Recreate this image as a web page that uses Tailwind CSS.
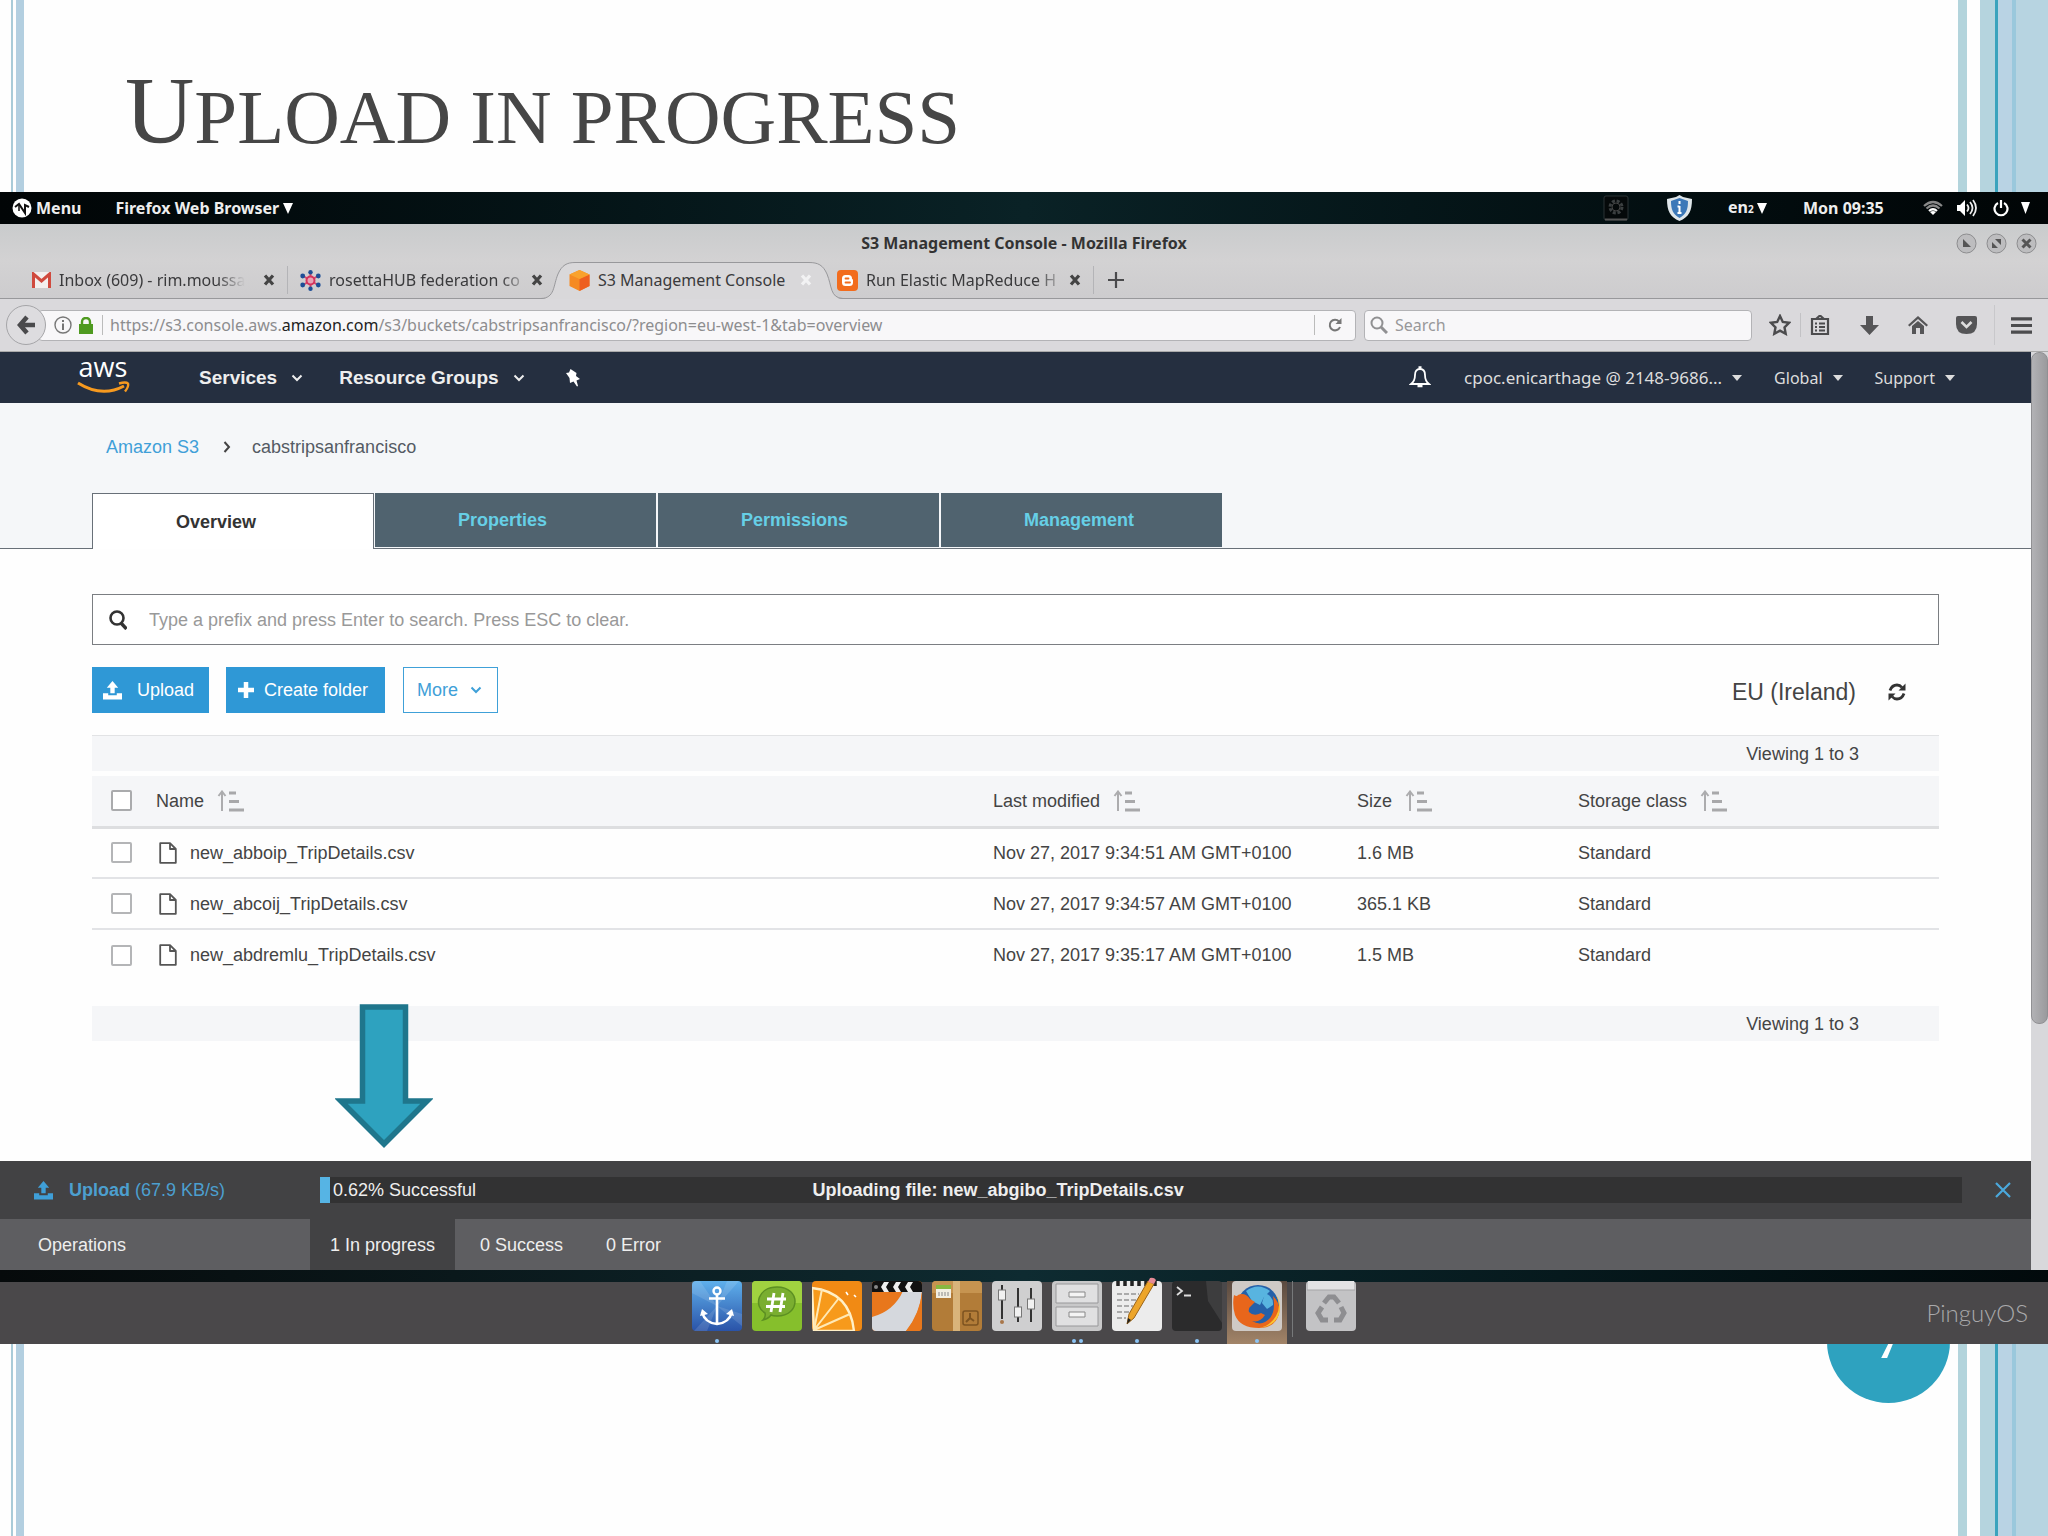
<!DOCTYPE html>
<html lang="en">
<head>
<meta charset="utf-8">
<meta name="viewport" content="width=device-width, initial-scale=1">
<title>Upload in progress</title>
<script src="https://cdn.jsdelivr.net/npm/@tailwindcss/browser@4"></script>
</head>
<body class="bg-[#fefefe]">
<svg class="hidden" aria-hidden="true">
  <symbol id="sort" viewBox="0 0 28 22"><path d="M5 21V2M1.500 6 5 1.500 8.500 6" fill="none" stroke="#acacae" stroke-width="2"/><path d="M12 3h7M12 11.500h10M12 20h15" stroke="#a8a8aa" stroke-width="3"/></symbol>
  <symbol id="file" viewBox="0 0 18 22"><path d="M1.200 1.200H11L16.800 7v13.800H1.200zM11 1.200V7h5.800" fill="#fff" stroke="#555" stroke-width="1.800" stroke-linejoin="round"/></symbol>
  <symbol id="upload" viewBox="0 0 20 20"><path d="M10 0 16 7H12.300V13H7.700V7H4z"/><path d="M0 13h5.500v2h9v-2H20v6.500H0z"/></symbol>
  <symbol id="chev" viewBox="0 0 12 8"><path d="M1.500 1.500 6 6l4.500-4.500" fill="none" stroke="currentColor" stroke-width="2"/></symbol>
  <symbol id="caret" viewBox="0 0 10 6"><path d="M0 0h10L5 6z" fill="currentColor"/></symbol>
  <symbol id="x" viewBox="0 0 12 12"><path d="M2 1.500 10 10.500M10 1.500 2 10.500" stroke="currentColor" stroke-width="3.200"/></symbol>
</svg>

<div class="grid min-h-screen overflow-hidden">
  <!-- Slide side stripes -->
  <div class="col-start-1 row-start-1 flex" aria-hidden="true">
    <div class="ml-[11px] w-[2px] bg-[#a9cbd8]"></div>
    <div class="ml-[3px] w-2 bg-[#b3cfe0]"></div>
    <div class="ml-auto w-[9px] bg-[#b3d4dc]"></div>
    <div class="ml-[13px] w-[15px] bg-[#b5d4de]"></div>
    <div class="w-[3px] bg-[#3ba3bd]"></div>
    <div class="w-[14px] bg-[#b9d3e4]"></div>
    <div class="w-1 bg-[#9ac8dc]"></div>
    <div class="w-8 bg-[#b7d4e1]"></div>
  </div>

  <div class="col-start-1 row-start-1 flex flex-col">
    <h1 class="flex h-48 items-center px-[125px] font-['Liberation_Serif',serif] text-[#464646]"><span class="block w-full pt-9 text-[77px] leading-[96px] uppercase first-letter:text-[96px]">Upload in progress</span></h1>

    <section class="relative z-10 bg-white font-['Liberation_Sans',sans-serif] text-[18px] leading-6 text-[#444]">
      <!-- Desktop panel -->
      <header class="flex h-8 items-center bg-linear-to-r from-[#010506] via-[#0a2226] to-[#010506] pr-[18px] pl-3 font-['Noto_Sans',sans-serif] text-[16px] font-bold text-[#eee]">
        <button class="flex items-center gap-1">
          <svg class="size-5" viewBox="0 0 20 20"><circle cx="10" cy="10" r="9.500" fill="#fff"/><path d="m3 9 4-3 6 9V7l4 2" fill="none" stroke="#111" stroke-width="2"/><path d="M7 6v7" stroke="#111" stroke-width="1.500"/></svg>Menu</button>
        <button class="ml-[34px] flex items-center gap-1">Firefox Web Browser <svg class="h-[11px] w-[10px]" viewBox="0 0 10 11"><path d="M0 0h10L5 11z" fill="#fff"/></svg></button>
        <div class="ml-auto flex items-center">
          <svg class="size-[26px]" viewBox="0 0 26 26"><rect x="1" y="1" width="24" height="24" rx="2" fill="#05090a" stroke="#2b3335"/><path d="M2 24.500h22" stroke="#555" stroke-width="2"/><circle cx="13" cy="12" r="6" fill="none" stroke="#3b3f40" stroke-width="3" stroke-dasharray="3 1.700"/><circle cx="13" cy="12" r="4" fill="none" stroke="#444"/></svg>
          <svg class="ml-[37px] h-7 w-[27px]" viewBox="0 0 27 28"><path d="M13.500 1 17 3l9 2c0 12-3 18-12.500 22C4 23 1 17 1 5l9-2z" fill="#dfe6ea"/><path d="M13.500 4 22 7c0 9-2 13-8.500 17C7 20 5 16 5 7z" fill="#3c78b8"/><path d="M13.500 7v3M13.500 12v7M11.500 12.500h2M11.500 19h4" stroke="#fff" stroke-width="2"/></svg>
          <button class="ml-[35px] flex w-11 items-center gap-[3px]"><span>en<span class="text-[10px]">2</span></span><svg class="h-[11px] w-[10px]" viewBox="0 0 10 11"><path d="M0 0h10L5 11z" fill="#fff"/></svg></button>
          <time class="ml-[31px] w-[82px] whitespace-nowrap">Mon 09:35</time>
          <svg class="ml-[38px] h-4 w-5" viewBox="0 0 20 16" fill="none" stroke-width="2.200"><path d="M1 6Q10-2 19 6M3.500 8.500Q10 2.500 16.500 8.500" stroke="#888"/><path d="M6 11q4-3.500 8 0" stroke="#fff"/><path d="m10 15-3-3q3-2 6 0z" fill="#fff"/></svg>
          <svg class="ml-[14px] h-[18px] w-5" viewBox="0 0 20 18"><path d="M0 6h3l5-5v16l-5-5H0z" fill="#fff"/><path d="M10 5.500q3 3.500 0 7M13 3q5 6 0 12M16 1q6 8 0 16" fill="none" stroke="#eee" stroke-width="1.800"/></svg>
          <svg class="ml-4 h-[18px] w-4" viewBox="0 0 16 18" fill="none" stroke="#fff" stroke-width="2.200"><path d="M5 4a6.500 6.500 0 1 0 6 0M8 1v8"/></svg>
          <svg class="ml-3 h-3 w-[9px]" viewBox="0 0 9 12"><path d="M0 0h9L4.500 12z" fill="#fff"/></svg>
        </div>
      </header>

      <!-- Window title and browser tabs -->
      <div class="border-b border-[#98989b] bg-linear-to-b from-[#c9cbcc] via-[#d3d2d3] to-[#cdccce] font-['Noto_Sans',sans-serif] text-[16px] text-[#3a3a3c]">
        <div class="grid h-[38px] grid-cols-[1fr_auto_1fr] items-center">
          <h2 class="col-start-2 font-bold text-[#333]">S3 Management Console - Mozilla Firefox</h2>
          <div class="flex justify-end gap-[9px] pr-[11px]">
            <button aria-label="Minimize"><svg class="size-[21px]" viewBox="0 0 21 21"><circle cx="10.500" cy="10.500" r="9.500" fill="#bdbdbf" stroke="#8d8d8f"/><path d="M7 6v8h8z" fill="#555"/></svg></button>
            <button aria-label="Maximize"><svg class="size-[21px]" viewBox="0 0 21 21"><circle cx="10.500" cy="10.500" r="9.500" fill="#bdbdbf" stroke="#8d8d8f"/><path d="M9 6h6v6zM6 9v6h6z" fill="#555"/></svg></button>
            <button aria-label="Close"><svg class="size-[21px]" viewBox="0 0 21 21"><circle cx="10.500" cy="10.500" r="9.500" fill="#bdbdbf" stroke="#8d8d8f"/><path d="m6.500 6.500 8 8m0-8-8 8" stroke="#555" stroke-width="3"/></svg></button>
          </div>
        </div>
        <div class="flex h-9 items-center pl-5 whitespace-nowrap">
          <div class="flex h-7 w-[268px] items-center border-r border-[#b4b4b7] pr-3 pl-3">
            <svg class="h-4 w-[19px] shrink-0" viewBox="0 0 19 16"><path d="M0 0h19v16H0z" fill="#f3efee"/><path d="M1.500 16V2l8 7 8-7v14" fill="none" stroke="#d04a3e" stroke-width="3"/></svg>
            <span class="ml-2 mask-r-from-85% mask-r-to-100%">Inbox (609) - rim.moussa</span>
            <button class="ml-auto" aria-label="Close tab"><svg class="size-3 text-[#444]"><use href="#x"/></svg></button>
          </div>
          <div class="flex w-[268px] items-center pr-[13px] pl-3">
            <svg class="h-[21px] w-[21px] shrink-0" viewBox="0 0 21 21"><path d="M10.500 3v15M4 6.500l13 8M17 6.500l-13 8" stroke="#d5486d" stroke-width="2"/><circle cx="10.500" cy="10.500" r="4" fill="#e8a2b5" stroke="#d5335c" stroke-width="2"/><g fill="#1d4e96"><circle cx="10.500" cy="2.200" r="2.200"/><circle cx="10.500" cy="18.800" r="2.200"/><circle cx="2.700" cy="6" r="2.400"/><circle cx="18.300" cy="6" r="2.400"/><circle cx="2.700" cy="15" r="2.400"/><circle cx="18.300" cy="15" r="2.400"/></g></svg>
            <span class="ml-2 mask-r-from-90% mask-r-to-105%">rosettaHUB federation co</span>
            <button class="ml-auto" aria-label="Close tab"><svg class="size-3 text-[#444]"><use href="#x"/></svg></button>
          </div>
          <div class="relative flex w-[269px] items-center pr-[13px] pl-[13px]">
            <svg class="absolute -top-[6px] -left-[15px] h-[37px] w-[302px]" viewBox="0 0 302 37"><path d="M0 37C14 36 12 24 17 12 21 3 26 .5 34 .5H268C277 .5 282 3 286 12c5 12 3 24 16 25z" fill="#d9d8da"/><path d="M0 36.500C14 36 12 24 17 12 21 3 26 .5 34 .5H268C277 .5 282 3 286 12c5 12 3 24 16 24.500" fill="none" stroke="#98989b"/></svg>
            <svg class="relative h-[21px] w-[21px] shrink-0" viewBox="0 0 21 21"><path d="m10.500 0 10 4.500v11.500l-10 5-10-5V4.500z" fill="#f58a22"/><path d="m10.500 9 10-4.500v11.500l-10 5z" fill="#ee5f20"/><path d="m10.500 0 10 4.500-10 4.500-10-4.500z" fill="#f9a22c"/></svg>
            <span class="relative ml-2">S3 Management Console</span>
            <button class="relative ml-auto" aria-label="Close tab"><svg class="size-3 text-[#f2f2f3]"><use href="#x"/></svg></button>
          </div>
          <div class="flex h-7 w-[269px] items-center border-r border-[#b4b4b7] pr-3 pl-3">
            <svg class="h-[21px] w-[21px] shrink-0" viewBox="0 0 21 21"><rect width="21" height="21" rx="4" fill="#f26c1d"/><path d="M8.500 5h3q3.500 0 3.500 3.500 0 1 1 1v3Q16 16 12.500 16h-4Q5 16 5 12.500v-4Q5 5 8.500 5z" fill="#fff"/><path d="M8.500 8.500h3M8.500 12.500h4.500" stroke="#f26c1d" stroke-width="1.800" stroke-linecap="round"/></svg>
            <span class="ml-2 mask-r-from-90% mask-r-to-105%">Run Elastic MapReduce H</span>
            <button class="ml-auto" aria-label="Close tab"><svg class="size-3 text-[#444]"><use href="#x"/></svg></button>
          </div>
          <button class="ml-[14px]" aria-label="New tab"><svg class="size-4" viewBox="0 0 16 16"><path d="M8 0v16M0 8h16" stroke="#4a4a4c" stroke-width="2.200"/></svg></button>
        </div>
      </div>

      <!-- Address bar -->
      <div class="flex h-[53px] items-center border-b border-[#aaa] bg-[#dad9dc] pr-4 pl-1.5 font-['Noto_Sans',sans-serif] text-[16px]">
        <button class="relative z-10 flex size-10 shrink-0 items-center justify-center rounded-full border border-[#a5a5a8] bg-[#dddcdf]" aria-label="Back"><svg class="h-5 w-[18px]" viewBox="0 0 18 20"><path d="M10 2 3 10l7 8M3 10h15" fill="none" stroke="#4a4a4c" stroke-width="4.500"/></svg></button>
        <div class="-ml-2 flex h-[31px] grow items-center rounded-sm border border-[#b3b3b6] bg-[#f8f7f9]">
          <svg class="ml-[15px] size-[18px]" viewBox="0 0 18 18"><circle cx="9" cy="9" r="8" fill="none" stroke="#777" stroke-width="1.400"/><path d="M9 4v2M9 7.500V14" stroke="#666" stroke-width="1.800"/></svg>
          <svg class="ml-[7px] h-[17px] w-[14px]" viewBox="0 0 14 17"><path d="M3 8V5q0-4 4-4t4 4v3" fill="none" stroke="#4f9a20" stroke-width="2.400"/><path d="M0 7h14v10H0z" fill="#4f9a20"/></svg>
          <div class="mr-[7px] ml-[9px] h-5 w-px bg-[#bbb]"></div>
          <div role="textbox" contenteditable="true" aria-label="Address" class="grow whitespace-nowrap text-[#8d8d8f]">https://s3.console.aws.<span class="text-[#222]">amazon.com</span>/s3/buckets/cabstripsanfrancisco/?region=eu-west-1&amp;tab=overview</div>
          <div class="h-5 w-px bg-[#bbb]"></div>
          <button class="px-[13px]" aria-label="Reload"><svg class="size-[14px]" viewBox="0 0 14 14"><path d="M11 3.500A5.300 5.300 0 1 0 12 9" fill="none" stroke="#777" stroke-width="2"/><path d="M13.500 0v6h-6z" fill="#777"/></svg></button>
        </div>
        <label class="ml-2 flex h-[31px] w-[388px] items-center rounded-sm border border-[#b3b3b6] bg-[#f8f7f9] pl-[5px]">
          <svg class="size-[18px]" viewBox="0 0 18 18" fill="none" stroke="#909092"><circle cx="7" cy="7" r="5.500" stroke-width="2"/><path d="m11 11 6 6" stroke-width="3"/></svg>
          <input class="ml-[7px] w-72 outline-none placeholder:text-[#98989a]" type="search" placeholder="Search" aria-label="Search the web">
        </label>
        <button class="ml-[17px]" aria-label="Bookmark"><svg class="size-[22px]" viewBox="0 0 22 22"><path d="m11 2 2.800 6 6.200.8-4.500 4.500 1.200 6.500L11 16.700 5.300 19.800l1.200-6.500L2 8.800 8.200 8z" fill="none" stroke="#4c4c4e" stroke-width="2.400"/></svg></button>
        <div class="ml-[9px] h-6 w-px bg-[#c2c2c5]"></div>
        <button class="ml-[9px]" aria-label="Bookmarks list"><svg class="h-5 w-[20px]" viewBox="0 0 20 20"><path d="M2 4h16v15H2zM6 4l4-3.500L14 4" fill="none" stroke="#4c4c4e" stroke-width="2.200"/><path d="M5 8.500h2M9 8.500h6M5 12h2M9 12h6M5 15.500h2M9 15.500h6" stroke="#4c4c4e" stroke-width="1.800"/></svg></button>
        <button class="ml-[30px]" aria-label="Downloads"><svg class="h-[19px] w-[19px]" viewBox="0 0 19 19"><path d="M6 0h7v9h6l-9.500 10L0 9h6z" fill="#555557"/></svg></button>
        <button class="ml-[29px]" aria-label="Home"><svg class="h-5 w-5" viewBox="0 0 20 20"><path d="m0 10 10-9 10 9-1.500 1.500L10 4l-8.500 7.500z" fill="#555557"/><path d="M4 11l6-5 6 5v8h-4v-6H8v6H4z" fill="#555557"/></svg></button>
        <button class="ml-[28px]" aria-label="Pocket"><svg class="h-[18px] w-[21px]" viewBox="0 0 21 18"><path d="M0 2q0-2 2-2h17q2 0 2 2v6q0 10-10.500 10T0 8z" fill="#555557"/><path d="m5.500 6 5 5 5-5" fill="none" stroke="#ddd" stroke-width="2.600"/></svg></button>
        <div class="ml-[17px] h-10 w-px bg-[#c8c8cb]"></div>
        <button class="ml-4" aria-label="Open menu"><svg class="h-[17px] w-[21px]" viewBox="0 0 21 17"><path d="M0 1.800h21M0 8.500h21M0 15.200h21" stroke="#4c4c4e" stroke-width="3.200"/></svg></button>
      </div>

      <div class="flex">
        <div class="min-w-0 grow">
          <!-- AWS navigation -->
          <nav class="flex h-[51px] items-center bg-[#252f40] pr-[76px] pl-[76px] text-[19px] font-bold text-[#eee]">
            <a href="#" aria-label="AWS home"><svg class="h-9 w-14" viewBox="0 0 56 36"><text x="27" y="17" text-anchor="middle" font-family="Open Sans, sans-serif" font-size="27" font-weight="500" fill="#fff">aws</text><path d="M2 23q24 15 46 3" fill="none" stroke="#f79a1f" stroke-width="3"/><path d="M43 23.500q7-2 9 0 1 3-3 8" fill="none" stroke="#f79a1f" stroke-width="2.400"/></svg></a>
            <button class="ml-[67px] flex items-center gap-[14px]">Services <svg class="h-2 w-3"><use href="#chev"/></svg></button>
            <button class="ml-9 flex items-center gap-[14px]">Resource Groups <svg class="h-2 w-3"><use href="#chev"/></svg></button>
            <button class="ml-10" aria-label="Pin shortcuts"><svg class="h-[18px] w-4" viewBox="0 0 16 18"><path d="m5.500 0 6 4-.5 3 4 3-3.500 1.500L13 17l-1 .5-3.500-5L5 14l-.5-5L1 4l3-.5z" fill="#fff"/></svg></button>
            <div class="ml-auto flex items-center font-['Noto_Sans',sans-serif] text-[16px] font-normal text-[#ddd]">
              <button aria-label="Notifications"><svg class="h-[23px] w-[22px]" viewBox="0 0 22 23"><path d="M2 18q4-3 4-9 0-6 5-6t5 6q0 6 4 9z" fill="none" stroke="#fff" stroke-width="1.800"/><path d="M9.500 1.500h3M8.500 20h5" stroke="#fff" stroke-width="2.400"/></svg></button>
              <button class="ml-[33px] flex items-center gap-[10px] text-[17px]">cpoc.enicarthage @ 2148-9686... <svg class="h-[6px] w-[10px]"><use href="#caret"/></svg></button>
              <button class="ml-8 flex items-center gap-[10px]">Global <svg class="h-[6px] w-[10px]"><use href="#caret"/></svg></button>
              <button class="ml-8 flex items-center gap-[10px]">Support <svg class="h-[6px] w-[10px]"><use href="#caret"/></svg></button>
            </div>
          </nav>

          <!-- Breadcrumb and section tabs -->
          <div class="bg-[#f5f7f9] pt-8">
            <nav class="flex h-6 items-center pl-[106px]" aria-label="Breadcrumb">
              <a href="#" class="text-[#3fa0d8]">Amazon S3</a>
              <svg class="mr-[21px] ml-6 h-3 w-2" viewBox="0 0 8 12"><path d="m1.500 1 4.500 5-4.500 5" fill="none" stroke="#444" stroke-width="2"/></svg>
              <span class="text-[#545b64]">cabstripsanfrancisco</span>
            </nav>
            <div class="mt-[34px] flex h-14 font-bold" role="tablist">
              <div class="w-[92px] border-b border-[#687078]"></div>
              <button role="tab" aria-selected="true" class="w-[282px] border border-b-0 border-[#687078] bg-white pl-[83px] text-left text-[#333]">Overview</button>
              <div class="flex grow gap-0.5 border-b border-[#687078] pb-px pl-px text-[#66cfe6]">
                <button role="tab" class="w-[281px] bg-[#50636f] pl-[83px] text-left">Properties</button>
                <button role="tab" class="w-[281px] bg-[#50636f] pl-[83px] text-left">Permissions</button>
                <button role="tab" class="w-[281px] bg-[#50636f] pl-[83px] text-left">Management</button>
              </div>
            </div>
          </div>

          <main class="flex h-[612px] flex-col bg-[#fefefe] px-[92px] pt-[45px]">
            <label class="flex h-[51px] shrink-0 items-center border border-[#7b7e82] bg-white pl-4">
              <svg class="h-5 w-[18px]" viewBox="0 0 18 20" fill="none" stroke="#333"><circle cx="8" cy="8" r="6.500" stroke-width="2.600"/><path d="m12 13 5.500 6" stroke-width="3.400"/></svg>
              <input class="ml-[22px] grow outline-none placeholder:text-[#999]" type="search" placeholder="Type a prefix and press Enter to search. Press ESC to clear." aria-label="Search objects">
            </label>
            <div class="mt-[22px] flex items-center">
              <button class="flex h-[46px] w-[117px] items-center gap-[15px] bg-[#2f98d6] pl-[11px] text-white"><svg class="h-[19px] w-[19px]" fill="#fff"><use href="#upload"/></svg>Upload</button>
              <button class="ml-[17px] flex h-[46px] w-[159px] items-center gap-[10px] bg-[#2f98d6] pl-3 text-white"><svg class="size-4 shrink-0" viewBox="0 0 16 16"><path d="M8 0v16M0 8h16" stroke="#fff" stroke-width="4.500"/></svg><span class="whitespace-nowrap">Create folder</span></button>
              <button class="ml-[18px] flex h-[46px] w-[95px] items-center gap-3 border border-[#3fa0d8] bg-white pl-[13px] text-[#3fa0d8]">More <svg class="h-2 w-3"><use href="#chev"/></svg></button>
              <div class="mr-[33px] ml-auto flex items-center gap-8 pt-1">
                <span class="text-[23px]">EU (Ireland)</span>
                <button aria-label="Refresh"><svg class="size-[18px]" viewBox="0 0 18 18"><path d="M2 7.500Q4 2 9 2q3 0 5 2.500M16 10.500Q14 16 9 16q-3 0-5-2.500" fill="none" stroke="#333" stroke-width="2.800"/><path d="M17.500.5v7h-7zM.5 17.500v-7h7z" fill="#333"/></svg></button>
              </div>
            </div>
            <p class="mt-[22px] flex h-9 items-center justify-end border-t border-[#e2e3e5] bg-[#f5f6f8] pr-20">Viewing 1 to 3</p>
            <table class="mt-[5px] w-full table-fixed text-left">
              <colgroup><col class="w-16"><col><col class="w-[364px]"><col class="w-[221px]"><col class="w-[361px]"></colgroup>
              <thead class="border-b-3 border-[#dddee0] bg-[#f5f6f8]">
                <tr class="h-[51px]">
                  <th class="pl-[19px]"><input type="checkbox" aria-label="Select all" class="block size-[21px] appearance-none rounded-xs border-2 border-[#aaabad] bg-white"></th>
                  <th class="font-normal"><button class="flex items-center gap-[13px]">Name <svg class="h-[22px] w-7"><use href="#sort"/></svg></button></th>
                  <th class="font-normal"><button class="flex items-center gap-[13px]">Last modified <svg class="h-[22px] w-7"><use href="#sort"/></svg></button></th>
                  <th class="font-normal"><button class="flex items-center gap-[13px]">Size <svg class="h-[22px] w-7"><use href="#sort"/></svg></button></th>
                  <th class="font-normal"><button class="flex items-center gap-[13px]">Storage class <svg class="h-[22px] w-7"><use href="#sort"/></svg></button></th>
                </tr>
              </thead>
              <tbody>
                <tr class="h-[51px] border-b-2 border-[#e2e3e6]">
                  <td class="pl-[19px]"><input type="checkbox" aria-label="Select new_abboip_TripDetails.csv" class="block size-[21px] appearance-none rounded-xs border-2 border-[#b4b5b7] bg-white"></td>
                  <td><div class="flex items-center gap-[13px] pl-[3px]"><svg class="h-[22px] w-[18px]"><use href="#file"/></svg>new_abboip_TripDetails.csv</div></td>
                  <td>Nov 27, 2017 9:34:51 AM GMT+0100</td><td>1.6 MB</td><td>Standard</td>
                </tr>
                <tr class="h-[51px] border-b-2 border-[#e2e3e6]">
                  <td class="pl-[19px]"><input type="checkbox" aria-label="Select new_abcoij_TripDetails.csv" class="block size-[21px] appearance-none rounded-xs border-2 border-[#b4b5b7] bg-white"></td>
                  <td><div class="flex items-center gap-[13px] pl-[3px]"><svg class="h-[22px] w-[18px]"><use href="#file"/></svg>new_abcoij_TripDetails.csv</div></td>
                  <td>Nov 27, 2017 9:34:57 AM GMT+0100</td><td>365.1 KB</td><td>Standard</td>
                </tr>
                <tr class="h-[51px]">
                  <td class="pl-[19px]"><input type="checkbox" aria-label="Select new_abdremlu_TripDetails.csv" class="block size-[21px] appearance-none rounded-xs border-2 border-[#b4b5b7] bg-white"></td>
                  <td><div class="flex items-center gap-[13px] pl-[3px]"><svg class="h-[22px] w-[18px]"><use href="#file"/></svg>new_abdremlu_TripDetails.csv</div></td>
                  <td>Nov 27, 2017 9:35:17 AM GMT+0100</td><td>1.5 MB</td><td>Standard</td>
                </tr>
              </tbody>
            </table>
            <div class="relative mt-[26px]">
              <p class="flex h-[35px] items-center justify-end bg-[#f5f6f8] pr-20">Viewing 1 to 3</p>
              <svg class="absolute -top-[2px] left-[243px] h-[144px] w-[98px]" viewBox="0 0 98 144" aria-hidden="true"><path d="M27.500 3H70.500V97H92L49 140 6 97H27.500z" fill="#2ea2bf" stroke="#1f768c" stroke-width="5.500"/></svg>
            </div>
          </main>

          <!-- Transfer status -->
          <div class="bg-[#424244] text-[#eee]">
            <div class="flex h-[58px] items-center pl-[34px] text-[#4c9fcf]">
              <svg class="h-[19px] w-[19px]" fill="#3f9fd8"><use href="#upload"/></svg>
              <span class="ml-4 w-[251px]"><b>Upload</b> (67.9 KB/s)</span>
              <div class="grid h-[26px] grow grid-cols-[30%_1fr] items-center bg-[#323233] text-[#eee]" role="progressbar" aria-label="Upload progress" aria-valuenow="0.62">
                <div class="flex items-center gap-[3px]"><div class="h-[26px] bg-[#56b4e4]" style="width:10px"></div>0.62% Successful</div>
                <b>Uploading file: new_abgibo_TripDetails.csv</b>
              </div>
              <button class="mr-5 ml-[33px]" aria-label="Dismiss"><svg class="size-4" viewBox="0 0 16 16"><path d="m1 1 14 14M15 1 1 15" stroke="#4aa8dc" stroke-width="2.200"/></svg></button>
            </div>
            <div class="flex h-[51px] bg-[#5e5e61]">
              <span class="flex w-[310px] items-center pl-[38px]">Operations</span>
              <button class="w-[145px] bg-[#424244] text-center">1 In progress</button>
              <button class="ml-[25px]">0 Success</button>
              <button class="ml-[43px]">0 Error</button>
            </div>
          </div>
        </div>
        <!-- Page scrollbar -->
        <div class="w-[17px] shrink-0 bg-[#d8d8db]" aria-hidden="true"><div class="h-[672px] rounded-lg border border-[#909093] bg-linear-to-r from-[#b2b2b5] to-[#9a9a9d]"></div></div>
      </div>

      <!-- Dock -->
      <div class="h-3 bg-linear-to-r from-[#060a0b] via-[#0e2b31] to-[#020a0c]"></div>
      <footer class="grid h-[62px] grid-cols-[1fr_auto_1fr] bg-[#4a484a]">
        <div class="col-start-2 -mt-px flex items-start gap-[10px]">
          <button class="flex w-[50px] flex-col items-center gap-2" aria-label="Docky"><svg class="size-[50px] shrink-0" viewBox="0 0 50 50"><defs><linearGradient id="bl" x2="0" y2="1"><stop stop-color="#5fb0ec"/><stop offset="1" stop-color="#2a53a8"/></linearGradient></defs><rect width="50" height="50" rx="4" fill="url(#bl)"/><path d="M25 25 0 12V0h8zM25 25 35 0h12zM25 25l25 8v12zM25 25 15 50H2z" fill="#fff" opacity=".12"/><circle cx="25" cy="10" r="3.500" fill="none" stroke="#fff" stroke-width="2.400"/><path d="M25 14v28M17 17.500h16M10 31q3 11 15 12 12-1 15-12" fill="none" stroke="#fff" stroke-width="2.600"/><path d="m8 35 2-7 6 5zM42 35l-2-7-6 5z" fill="#fff"/></svg><span class="h-1 w-1 rounded-full bg-[#8cc4f5]"></span></button>
          <button class="w-[50px]" aria-label="Chat"><svg class="size-[50px]" viewBox="0 0 50 50"><rect width="50" height="50" rx="4" fill="#86bf2c"/><path d="M0 4q0-4 4-4h42q4 0 4 4v18H0z" fill="#a0d240"/><path d="M25 6c24 0 24 29 0 29q-4 0-6-1-3 4-8 5 3-3 2-7C1 25 6 6 25 6z" fill="#7aae30" stroke="#5c8f22" stroke-width="1.500"/><path d="m22 12-3 19M31 12l-3 19M15 18h19M14 25.500h19" stroke="#fff" stroke-width="2.800"/></svg></button>
          <button class="w-[50px]" aria-label="Clementine"><svg class="size-[50px]" viewBox="0 0 50 50"><rect width="50" height="50" rx="4" fill="#f18a14"/><path d="M0 7q38 4 42 43H2z" fill="#f79a1b" stroke="#fff0c8" stroke-width="2.400"/><path d="M2 49 10 8M2 49 27 17M2 49 38 33" stroke="#ffe9b5" stroke-width="2"/><path d="M34 11l2 3M42 14l2 2" stroke="#fff" stroke-width="1.600"/></svg></button>
          <button class="w-[50px]" aria-label="Video player"><svg class="size-[50px]" viewBox="0 0 50 50"><rect width="50" height="50" rx="4" fill="#e8771c"/><path d="M31 10h19q-2 24-16 40H4q-4 0-4-4V36Q22 30 31 10z" fill="#d5d8dd"/><path d="M50 11v35q0 4-4 4H34Q48 32 50 11z" fill="#e8771c"/><path d="M0 11V4q0-4 4-4h42q4 0 4 4v7z" fill="#111"/><path d="M12 1h5l-3 5 3 5h-5L9 6zM24 1h5l-3 5 3 5h-5l-3-5zM36 1h5l-3 5 3 5h-5l-3-5z" fill="#eee"/><circle cx="4" cy="6" r="2" fill="#888"/></svg></button>
          <button class="w-[50px]" aria-label="Package manager"><svg class="size-[50px]" viewBox="0 0 50 50"><rect width="50" height="50" rx="4" fill="#b27c38"/><path d="M0 4q0-4 4-4h42q4 0 4 4v8H0z" fill="#c69450"/><path d="M21 0h7v50h-7z" fill="#d9b47a"/><path d="M4 4h15v13H4z" fill="#f3efe2"/><path d="M4 4h15v4H4z" fill="#88b840"/><path d="M7 11v4M10 11v4M13 11v4M16 11v4" stroke="#888"/><rect x="31" y="30" width="15" height="14" rx="2" fill="none" stroke="#7d5320" stroke-width="1.500"/><path d="M38 32v5l-4 4M38 37l4 3" stroke="#7d5320" stroke-width="2" fill="none"/></svg></button>
          <button class="w-[50px]" aria-label="Audio mixer"><svg class="size-[50px]" viewBox="0 0 50 50"><rect width="50" height="50" rx="4" fill="#cfcfd0"/><path d="M10 4v34M26 7v34M39 7v34" stroke="#333" stroke-width="2"/><circle cx="10" cy="41" r="2" fill="#a8764a"/><g fill="#f1f1f1" stroke="#777"><rect x="6.500" y="9" width="7" height="10"/><rect x="22.500" y="26" width="7" height="10"/><rect x="35.500" y="18" width="7" height="10"/></g></svg></button>
          <button class="flex w-[50px] flex-col items-center gap-2" aria-label="Files"><svg class="size-[50px] shrink-0" viewBox="0 0 50 50"><rect width="50" height="50" rx="4" fill="#c8c8c9"/><path d="M4 3h42v19H4zM4 26h42v19H4z" fill="#e0e0e1" stroke="#98989a"/><path d="M17 11h16v5H17zM17 31h16v5H17z" fill="#f4f4f4" stroke="#888"/></svg><span class="flex gap-[3px]"><i class="h-1 w-1 rounded-full bg-[#8cc4f5]"></i><i class="h-1 w-1 rounded-full bg-[#8cc4f5]"></i></span></button>
          <button class="flex w-[50px] flex-col items-center gap-2" aria-label="Text editor"><svg class="size-[50px] shrink-0 overflow-visible" viewBox="0 0 50 50"><rect width="50" height="50" rx="4" fill="#ececec"/><path d="M6 0v5M13 0v5M20 0v5M27 0v5M34 0v5M43 0v5" stroke="#222" stroke-width="3.500"/><path d="M5 13h22M5 19h20M5 25h16M5 31h15M5 37h9" stroke="#aaa" stroke-width="1.800" stroke-dasharray="5 2"/><path d="m15 43 2-10L36 0l6 3-20 34z" fill="#eda52a" stroke="#9a641a"/><path d="m15 43 1-6 3 2z" fill="#222"/><path d="m36 1 2-4q4-1 6 2l-2 4z" fill="#e58a96"/></svg><span class="h-1 w-1 rounded-full bg-[#8cc4f5]"></span></button>
          <button class="flex w-[50px] flex-col items-center gap-2" aria-label="Terminal"><svg class="size-[50px] shrink-0" viewBox="0 0 50 50"><rect width="50" height="50" rx="4" fill="#2b2b2c"/><path d="M34 0h12q4 0 4 4v38L36 20z" fill="#4a4a4b" opacity=".6"/><path d="m5 6 5 4-5 4M12 14.500h7" fill="none" stroke="#ddd" stroke-width="1.800"/></svg><span class="h-1 w-1 rounded-full bg-[#8cc4f5]"></span></button>
          <button class="-mx-[5px] flex h-[63px] w-[60px] flex-col items-center gap-2 bg-linear-to-b from-[#5a4a40] to-[#a28468]" aria-label="Firefox"><svg class="size-[50px] shrink-0" viewBox="0 0 50 50"><rect width="50" height="50" rx="4" fill="#cfcac6"/><circle cx="26" cy="25" r="21" fill="#2560a8"/><path d="M14 10q12-9 24 0l-6 6-4 8-8-4z" fill="#58b4e0"/><path d="M33 12q9 4 8 12l-6 4-5-6z" fill="#58b4e0"/><path d="M2 14q3 2 4 0 7-3 12 4l5 3-4 4q-3 2-2 6 5 5 12 1l4 2q-5 8-13 6 10 6 18-3 6-7 3-22 8 8 6 18-4 14-20 14Q8 47 3 34 0 24 2 14z" fill="#e8661b"/><path d="M44 14q6 10 0 21-6 10-17 12 20-2 21-20 0-8-4-13z" fill="#fbc530"/></svg><span class="h-1 w-1 rounded-full bg-[#8cc4f5]"></span></button>
          <div class="h-14 w-px bg-[#77797a]"></div>
          <button class="ml-[3px] w-[50px]" aria-label="Trash"><svg class="size-[50px]" viewBox="0 0 50 50"><rect width="50" height="50" rx="4" fill="#c3c3c5"/><path d="M2 0h46v9H2z" fill="#e3e3e4"/><path d="M1 9h48" stroke="#a5a5a7"/><path d="m18 22 5-6h5l5 6M35 26l3 6-4 7h-6M22 39h-6l-4-7 4-6" fill="none" stroke="#8e8e91" stroke-width="5"/></svg></button>
        </div>
        <div class="flex items-center justify-end pr-5 font-['Lato',sans-serif] text-[24px] font-light text-[#a9a9ab]">PinguyOS</div>
      </footer>
    </section>

    <div class="-mt-[64px] mr-[98px] flex size-[123px] items-center justify-center self-end rounded-full bg-[#2ea2bf] font-['Liberation_Serif',serif] text-[50px] font-bold text-white">7</div>
  </div>
</div>
</body>
</html>
